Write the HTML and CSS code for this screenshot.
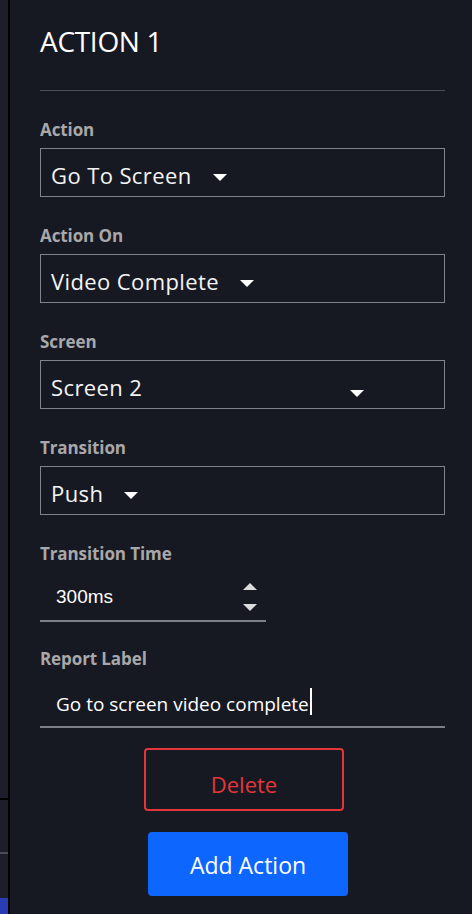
FILE: index.html
```html
<!DOCTYPE html>
<html lang="en">
<head>
<meta charset="utf-8">
<title>Action 1</title>
<link rel="stylesheet" href="styles.css">
</head>
<body>
<div class="app">
  <aside class="rail">
    <div class="rail-seg rail-top"></div>
    <div class="rail-line rail-line-dark"></div>
    <div class="rail-seg rail-mid"></div>
    <div class="rail-line rail-line-gray"></div>
    <div class="rail-seg rail-low"></div>
    <div class="rail-seg rail-blue"></div>
  </aside>
  <main class="panel">
    <h1 class="title">ACTION 1</h1>
    <div class="divider"></div>
    <div class="fields">
      <div class="field">
        <div class="label">Action</div>
        <div class="select"><span class="select-text">Go To Screen</span><span class="caret"></span></div>
      </div>
      <div class="field">
        <div class="label">Action On</div>
        <div class="select"><span class="select-text">Video Complete</span><span class="caret"></span></div>
      </div>
      <div class="field">
        <div class="label">Screen</div>
        <div class="select"><span class="select-text select-text-wide">Screen 2</span><span class="caret caret-low"></span></div>
      </div>
      <div class="field">
        <div class="label">Transition</div>
        <div class="select"><span class="select-text">Push</span><span class="caret"></span></div>
      </div>
      <div class="field">
        <div class="label">Transition Time</div>
        <div class="number">
          <span class="number-text">300ms</span>
          <span class="spinner"><span class="spin-up"></span><span class="spin-down"></span></span>
        </div>
      </div>
      <div class="field field-tight">
        <div class="label">Report Label</div>
        <div class="textinput"><span class="input-text">Go to screen video complete</span><span class="cursor"></span></div>
      </div>
    </div>
    <div class="actions">
      <button class="btn btn-delete">Delete</button>
      <button class="btn btn-add">Add Action</button>
    </div>
  </main>
</div>
</body>
</html>
```
FILE: styles.css
```css
* { box-sizing: border-box; }
html, body {
  margin: 0;
  padding: 0;
  height: 914px;
  overflow: hidden;
  background: #171922;
}
body {
  font-family: "Open Sans", "Noto Sans", sans-serif;
  color: #f2f2f2;
}
.app {
  display: flex;
  height: 914px;
}
.rail {
  width: 10px;
  flex: 0 0 10px;
  display: flex;
  flex-direction: column;
  border-right: 2px solid #000;
}
.rail-seg { background: #1c1e2b; }
.rail-top { height: 798px; }
.rail-line { height: 2px; }
.rail-line-dark { background: #000; }
.rail-line-gray { background: #4b4c56; }
.rail-mid { height: 52px; }
.rail-low { height: 44px; }
.rail-blue { flex: 1; background: #2a3cb3; }

.panel {
  flex: 1;
  padding: 22px 27px 0 30px;
}
.title {
  margin: 0;
  font-size: 28px;
  font-weight: 400;
  line-height: 38px;
  color: #ffffff;
  letter-spacing: -0.3px;
}
.divider {
  margin-top: 30px;
  height: 1px;
  background: #4b4d59;
}
.fields {
  margin-top: 27px;
  display: flex;
  flex-direction: column;
  gap: 27px;
}
.field-tight { margin-top: -2px; }
.label {
  font-size: 17px;
  font-weight: 700;
  line-height: 24px;
  color: #a8a8aa;
  margin-bottom: 6px;
  letter-spacing: -0.1px;
}
.select {
  height: 49px;
  border: 1px solid #80828e;
  display: flex;
  align-items: flex-start;
  padding: 11px 0 0 10px;
}
.select-text {
  font-size: 22px;
  line-height: 30px;
  color: #f4f4f4;
  white-space: nowrap;
  letter-spacing: 0.4px;
}
.select-text-wide { width: 278px; }
.caret {
  width: 0;
  height: 0;
  margin: 14px 0 0 21px;
  border-left: 7px solid transparent;
  border-right: 7px solid transparent;
  border-top: 7px solid #ffffff;
}
.caret-low { margin-top: 18px; }

.number {
  width: 226px;
  height: 50px;
  border-bottom: 2px solid #7c7e89;
  display: flex;
  align-items: flex-start;
  padding: 11px 9px 0 16px;
}
.number-text {
  font-family: "Liberation Sans", Arial, sans-serif;
  font-size: 19px;
  line-height: 22px;
  margin-top: 3px;
  color: #ffffff;
}
.spinner {
  margin-left: auto;
  display: flex;
  flex-direction: column;
  gap: 14px;
}
.spin-up, .spin-down {
  width: 0;
  height: 0;
  border-left: 7px solid transparent;
  border-right: 7px solid transparent;
}
.spin-up { border-bottom: 7px solid #dcdcdc; }
.spin-down { border-top: 7px solid #dcdcdc; }

.textinput {
  height: 51px;
  border-bottom: 2px solid #7c7e89;
  display: flex;
  align-items: flex-start;
  padding: 14px 0 0 16px;
}
.input-text {
  font-size: 19px;
  line-height: 26px;
  color: #ffffff;
  white-space: nowrap;
}
.cursor {
  width: 2px;
  height: 27px;
  margin: -3px 0 0 1px;
  background: #ffffff;
}

.actions {
  margin-top: 20px;
  display: flex;
  flex-direction: column;
  align-items: center;
  gap: 21px;
}
.btn {
  width: 200px;
  font-family: "Open Sans", "Noto Sans", sans-serif;
  border-radius: 4px;
  line-height: 30px;
  display: flex;
  align-items: center;
  justify-content: center;
  cursor: pointer;
}
.btn-delete {
  height: 63px;
  margin-left: 3px;
  background: transparent;
  border: 2px solid #e3363b;
  color: #e3363b;
  font-size: 22px;
  padding: 8px 0 0 0;
}
.btn-add {
  height: 64px;
  margin-left: 11px;
  background: #0d66fe;
  border: none;
  color: #ffffff;
  font-size: 23px;
  padding: 2px 0 0 0;
}
```
